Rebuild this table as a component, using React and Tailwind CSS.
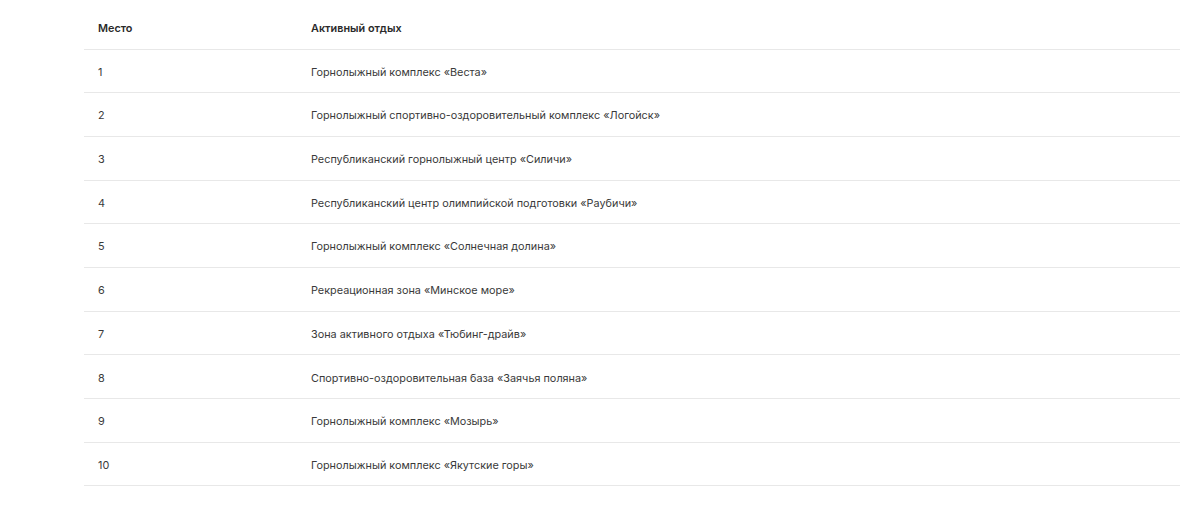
const rows = [
  "Горнолыжный комплекс «Веста»",
  "Горнолыжный спортивно-оздоровительный комплекс «Логойск»",
  "Республиканский горнолыжный центр «Силичи»",
  "Республиканский центр олимпийской подготовки «Раубичи»",
  "Горнолыжный комплекс «Солнечная долина»",
  "Рекреационная зона «Минское море»",
  "Зона активного отдыха «Тюбинг-драйв»",
  "Спортивно-оздоровительная база «Заячья поляна»",
  "Горнолыжный комплекс «Мозырь»",
  "Горнолыжный комплекс «Якутские горы»",
];

export default function App() {
  return (
    <div className="min-h-screen bg-white pt-[5px] px-[84px] font-['Inter',sans-serif] text-[10.85px] text-[#3a3a3a]">
      <table className="w-[1096px] border-collapse">
        <thead>
          <tr className="h-[44px] border-b border-[#e8e8e8]">
            <th className="w-[227px] pl-[14px] pt-[2px] text-left font-semibold text-[#2a2a2a]">Место</th>
            <th className="pt-[2px] text-left font-semibold text-[#2a2a2a]">Активный отдых</th>
          </tr>
        </thead>
        <tbody>
          {rows.map((name, i) => (
            <tr key={i} className="h-[43.7px] border-b border-[#e8e8e8]">
              <td className="pl-[14px] pt-[2px]">{i + 1}</td>
              <td className="pt-[2px]">{name}</td>
            </tr>
          ))}
        </tbody>
      </table>
    </div>
  );
}
